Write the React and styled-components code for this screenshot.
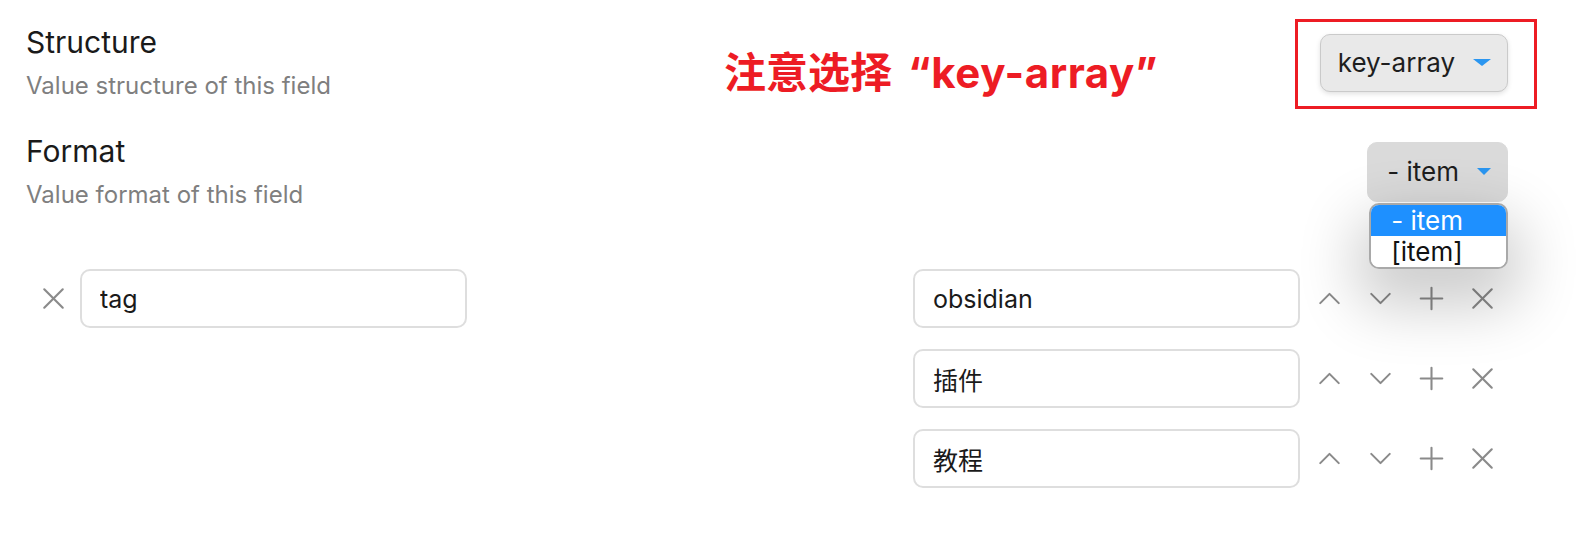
import React from "react";
import styled, { createGlobalStyle } from "styled-components";
import { ChevronUp, ChevronDown, Plus, X } from "lucide-react";

const GlobalStyle = createGlobalStyle`
  html, body {
    margin: 0;
    background: #ffffff;
  }
  body {
    font-family: Inter, "Noto Sans CJK SC", sans-serif;
    color: #1e1e1e;
  }
`;

const Page = styled.div`
  width: 1590px;
  height: 540px;
  box-sizing: border-box;
  padding: 8px 82px 0 26px;
  overflow: hidden;
`;

const SettingItem = styled.div`
  display: flex;
  align-items: center;
  padding: 15px 0;
`;

const Info = styled.div`
  flex: 0 0 698px;
`;

const Name = styled.div`
  font-size: 30px;
  line-height: 39px;
  color: #1a1a1a;
`;

const Description = styled.div`
  margin-top: 8px;
  font-size: 24px;
  line-height: 32px;
  color: #7f7f7f;
`;

const Note = styled.div`
  flex: 1;
  align-self: flex-start;
  padding-top: 26px;
  font-family: "Noto Sans CJK SC", sans-serif;
  font-weight: 700;
  font-size: 42px;
  line-height: 1;
  color: #ed1c24;
  white-space: nowrap;
`;

const NoteLatin = styled.span`
  font-family: Inter, sans-serif;
  font-weight: 700;
  margin-left: 16px;
  letter-spacing: 0.6px;
`;

const Control = styled.div`
  position: relative;
  margin-left: auto;
`;

const Highlight = styled.div`
  position: absolute;
  top: -15px;
  left: -25px;
  right: -29px;
  bottom: -17px;
  border: 3px solid #ed1c24;
  pointer-events: none;
`;

const Select = styled.div`
  display: flex;
  align-items: center;
  gap: 18px;
  box-sizing: border-box;
  height: ${(p) => (p.open ? 60 : 58)}px;
  padding: 0 16px 0 ${(p) => (p.open ? 19 : 17)}px;
  border-radius: 10px;
  background: ${(p) => (p.open ? "#dadada" : "#e9e9e9")};
  border: 1px solid ${(p) => (p.open ? "#dadada" : "#cacaca")};
  box-shadow: ${(p) => (p.open ? "none" : "0 2px 5px rgba(0, 0, 0, 0.12)")};
  font-size: 26px;
  color: #1e1e1e;
`;

const Caret = styled.span`
  width: 0;
  height: 0;
  border-left: ${(p) => p.size}px solid transparent;
  border-right: ${(p) => p.size}px solid transparent;
  border-top: 7px solid #2b96f0;
`;

const Menu = styled.div`
  position: absolute;
  top: calc(100% + 1px);
  left: 2px;
  right: 0;
  z-index: 2;
  box-sizing: border-box;
  border: 2px solid #a9a9a9;
  border-radius: 10px;
  overflow: hidden;
  background: #ffffff;
  box-shadow: 0 26px 60px 12px rgba(0, 0, 0, 0.2);
`;

const MenuItem = styled.div`
  height: 31px;
  padding-left: 20px;
  font-size: 26px;
  line-height: 31px;
  background: ${(p) => (p.active ? "#1e90ff" : "#ffffff")};
  color: ${(p) => (p.active ? "#ffffff" : "#111111")};
`;

const Entries = styled.div`
  display: flex;
  align-items: flex-start;
  margin-top: 43px;
`;

const Row = styled.div`
  display: flex;
  align-items: center;
`;

const Values = styled.div`
  margin-left: auto;
  display: flex;
  flex-direction: column;
  gap: 21px;
`;

const IconButton = styled.button`
  width: ${(p) => p.w}px;
  height: 59px;
  padding: 0;
  border: 0;
  background: none;
  display: flex;
  align-items: center;
  justify-content: center;
  color: #8a8a8a;
`;

const Field = styled.input`
  width: 387px;
  height: 59px;
  box-sizing: border-box;
  margin: 0;
  padding: 0 18px;
  border: 2px solid #dedede;
  border-radius: 10px;
  background: #ffffff;
  font-family: Inter, "Noto Sans CJK SC", sans-serif;
  font-size: 25px;
  color: #1a1a1a;
  outline: none;
`;

const Actions = styled.div`
  display: flex;
  margin-left: 4px;
`;

const icon = { size: 37, strokeWidth: 1.35 };

const values = ["obsidian", "插件", "教程"];

export default function App() {
  return (
    <Page>
      <GlobalStyle />
      <SettingItem>
        <Info>
          <Name>Structure</Name>
          <Description>Value structure of this field</Description>
        </Info>
        <Note>
          注意选择
          <NoteLatin>“key-array”</NoteLatin>
        </Note>
        <Control>
          <Select>
            key-array
            <Caret size={9} />
          </Select>
          <Highlight />
        </Control>
      </SettingItem>
      <SettingItem>
        <Info>
          <Name>Format</Name>
          <Description>Value format of this field</Description>
        </Info>
        <Control>
          <Select open>
            - item
            <Caret size={7} />
          </Select>
          <Menu>
            <MenuItem active>- item</MenuItem>
            <MenuItem>[item]</MenuItem>
          </Menu>
        </Control>
      </SettingItem>
      <Entries>
        <Row>
          <IconButton w={54}>
            <X {...icon} />
          </IconButton>
          <Field defaultValue="tag" />
        </Row>
        <Values>
          {values.map((v) => (
            <Row key={v}>
              <Field defaultValue={v} />
              <Actions>
                <IconButton w={51}>
                  <ChevronUp {...icon} />
                </IconButton>
                <IconButton w={51}>
                  <ChevronDown {...icon} />
                </IconButton>
                <IconButton w={51}>
                  <Plus {...icon} />
                </IconButton>
                <IconButton w={51}>
                  <X {...icon} />
                </IconButton>
              </Actions>
            </Row>
          ))}
        </Values>
      </Entries>
    </Page>
  );
}
